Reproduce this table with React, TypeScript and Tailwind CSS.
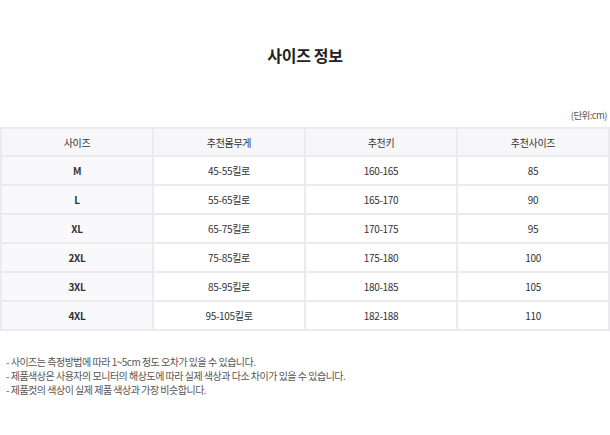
const rows = [
  { size: 'M', weight: '45-55킬로', height: '160-165', rec: '85' },
  { size: 'L', weight: '55-65킬로', height: '165-170', rec: '90' },
  { size: 'XL', weight: '65-75킬로', height: '170-175', rec: '95' },
  { size: '2XL', weight: '75-85킬로', height: '175-180', rec: '100' },
  { size: '3XL', weight: '85-95킬로', height: '180-185', rec: '105' },
  { size: '4XL', weight: '95-105킬로', height: '182-188', rec: '110' },
];

const notes = [
  '- 사이즈는 측정방법에 따라 1~5cm 정도 오차가 있을 수 있습니다.',
  '- 제품색상은 사용자의 모니터의 해상도에 따라 실제 색상과 다소 차이가 있을 수 있습니다.',
  '- 제품컷의 색상이 실제 제품 색상과 가장 비슷합니다.',
];

export default function App() {
  return (
    <div
      className="w-[610px] h-[435px] bg-white overflow-hidden"
      style={{ fontFamily: '"Noto Sans CJK KR", "Noto Sans", sans-serif' }}
    >
      <h1 className="pt-[43px] text-center text-[16px] font-bold text-[#222] leading-[24px] tracking-[-0.02em]">
        사이즈 정보
      </h1>

      <div className="mt-[41px] pr-[3px] text-right text-[9.5px] text-[#555] leading-[14px] tracking-[-0.06em]">
        (단위:cm)
      </div>

      <table className="mt-[5px] w-[610px] table-fixed border-collapse border-2 border-[#ebebed] text-[10px] text-[#333] tracking-[-0.03em]">
        <thead>
          <tr className="bg-[#f7f7f9]">
            <th className="h-[28px] border-2 border-[#ebebed] font-normal">사이즈</th>
            <th className="h-[28px] border-2 border-[#ebebed] font-normal">추천몸무게</th>
            <th className="h-[28px] border-2 border-[#ebebed] font-normal">추천키</th>
            <th className="h-[28px] border-2 border-[#ebebed] font-normal">추천사이즈</th>
          </tr>
        </thead>
        <tbody>
          {rows.map((r) => (
            <tr key={r.size}>
              <td className="h-[29px] border-2 border-[#ebebed] bg-[#f9f9fb] text-center font-bold text-[#333]">
                {r.size}
              </td>
              <td className="h-[29px] border-2 border-[#ebebed] text-center">{r.weight}</td>
              <td className="h-[29px] border-2 border-[#ebebed] text-center">{r.height}</td>
              <td className="h-[29px] border-2 border-[#ebebed] text-center">{r.rec}</td>
            </tr>
          ))}
        </tbody>
      </table>

      <div className="mt-[24px] pl-[6px] text-[10px] text-[#555] leading-[14px] tracking-[-0.05em]">
        {notes.map((n) => (
          <p key={n}>{n}</p>
        ))}
      </div>
    </div>
  );
}
